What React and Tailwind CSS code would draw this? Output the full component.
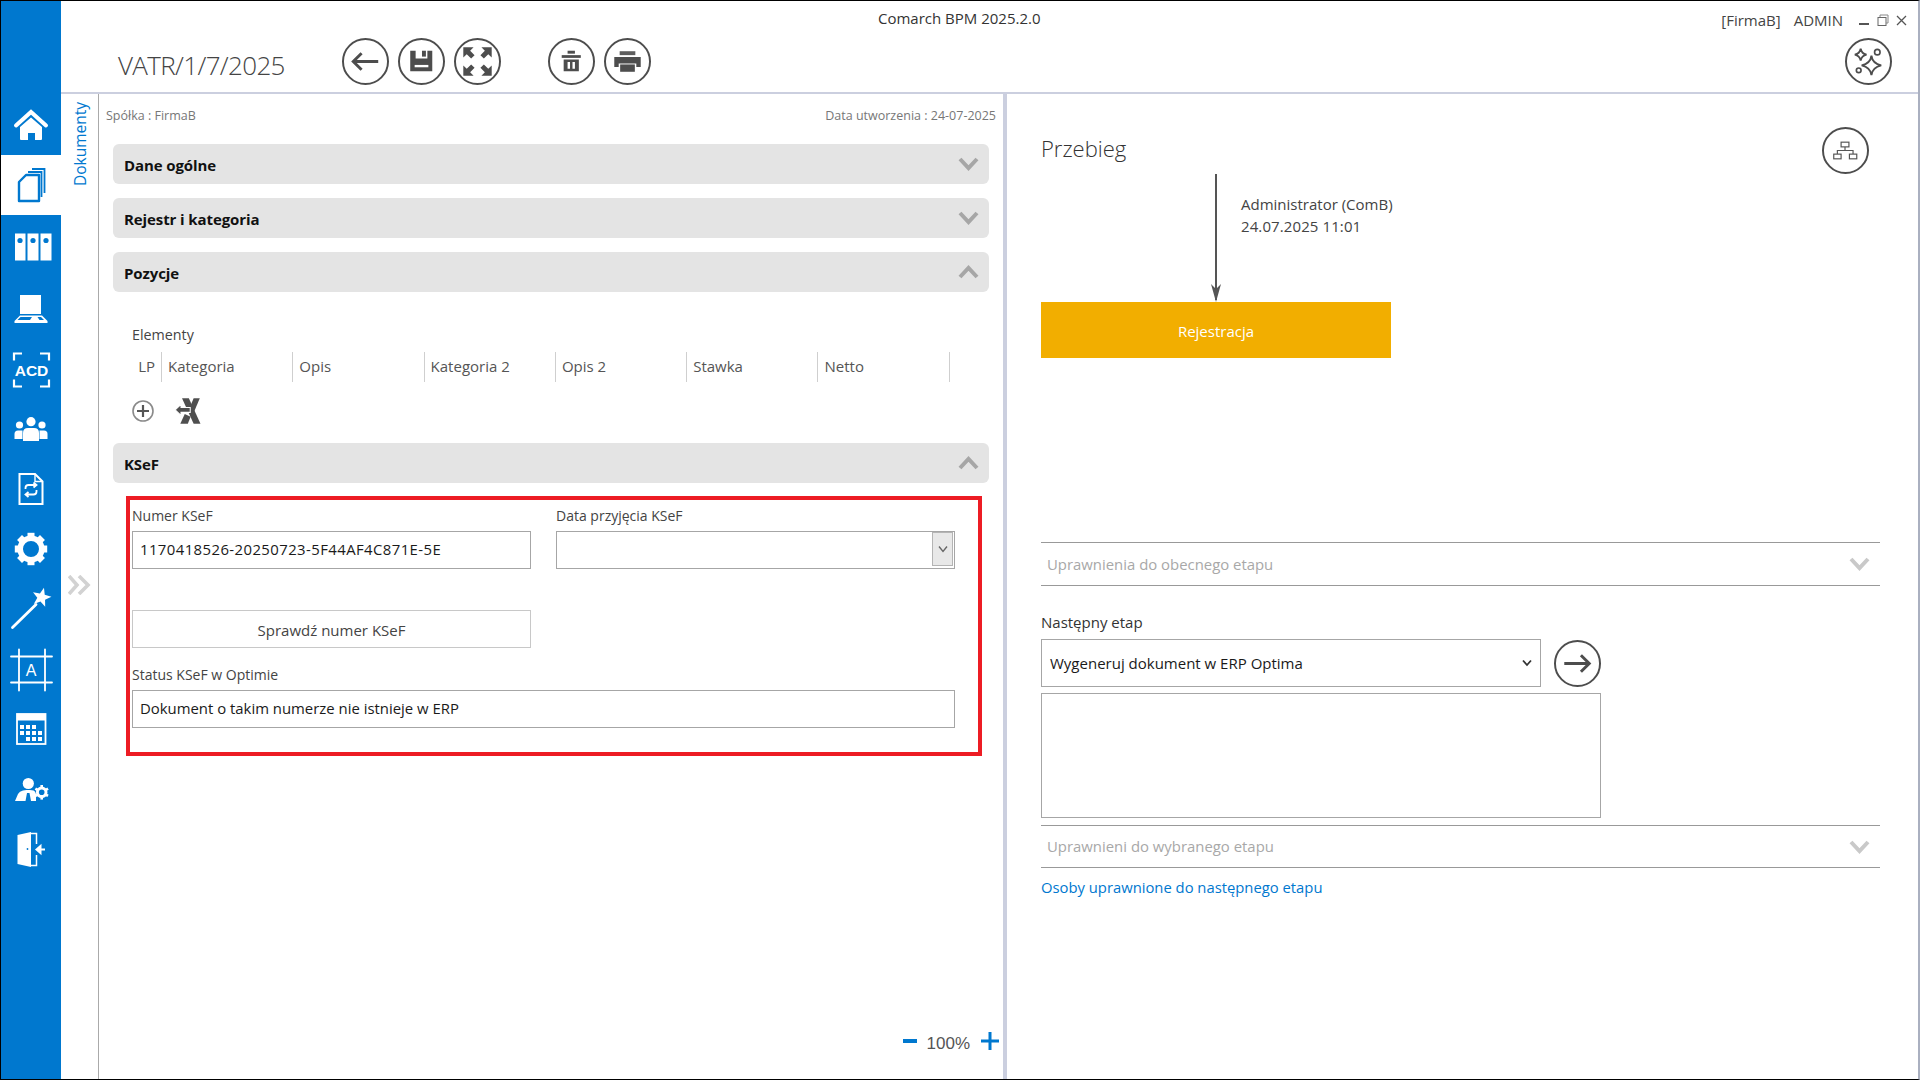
import React from "react";

const Btn = ({ children, vb = "0 0 48 48", cls = "" }) => (
  <svg width="47" height="47" viewBox={vb} className={"shrink-0 " + cls}>
    <circle cx="24" cy="24" r="23" fill="none" stroke="#4d4d4d" strokeWidth="2" />
    {children}
  </svg>
);

const Chev = ({ up, color = "#a6a6a6" }) => (
  <svg width="21" height="14" viewBox="0 0 21 14" className="shrink-0">
    <polyline points={up ? "2,12 10.5,3 19,12" : "2,2 10.5,11 19,2"} fill="none" stroke={color} strokeWidth="4" />
  </svg>
);

const star = (cx, cy, R, r) => {
  const p = [];
  for (let i = 0; i < 10; i++) {
    const a = -Math.PI / 2 + (i * Math.PI) / 5 + 0.25;
    const d = i % 2 ? r : R;
    p.push(`${cx + d * Math.cos(a)},${cy + d * Math.sin(a)}`);
  }
  return p.join(" ");
};

const W = "#ffffff";
const B = "#0078cf";

const Ic = ({ vb, children }) => (
  <svg width="44" height="44" viewBox={vb} className="shrink-0">{children}</svg>
);

const side = [
  { h: "h-[60px]", active: false, el: (
    <Ic vb="9 103 44 44">
      <polyline points="16,125.5 31,112 46,125.5" fill="none" stroke={W} strokeWidth="4" strokeLinecap="round" />
      <path d="M20 127 L31 117.5 L42 127 V139 Q42 140 41 140 H35 V133 H28 V140 H21 Q20 140 20 139 Z" fill={W} />
    </Ic>) },
  { h: "h-[60px]", active: true, el: (
    <Ic vb="9 163 44 44">
      <path d="M26 175 H39 V201 H19 V182 Z" fill="none" stroke={B} strokeWidth="2.4" strokeLinejoin="round" />
      <path d="M28 172 H41.5 V197" fill="none" stroke={B} strokeWidth="1.8" />
      <path d="M32 169 H44.5 V193" fill="none" stroke={B} strokeWidth="1.8" />
    </Ic>) },
  { h: "h-[63px]", active: false, el: (
    <Ic vb="9 224.5 44 44">
      <rect x="15" y="233" width="10.5" height="27" fill={W} />
      <rect x="27.5" y="233" width="11" height="27" fill={W} />
      <rect x="40.5" y="233" width="11" height="27" fill={W} />
      <circle cx="20" cy="240" r="2.6" fill={B} />
      <circle cx="33" cy="240" r="2.6" fill={B} />
      <circle cx="46" cy="240" r="2.6" fill={B} />
    </Ic>) },
  { h: "h-[62px]", active: false, el: (
    <Ic vb="9 287 44 44">
      <rect x="20" y="295" width="21" height="19" fill={W} />
      <path d="M20 315.5 H42 L47.5 321 V323 H14.5 V321 Z" fill={W} />
      <path d="M20.5 317 H32 L30 320 H17.5 Z" fill={B} />
      <path d="M37.5 317 H41 L44 320 H39.5 Z" fill={B} />
    </Ic>) },
  { h: "h-[59px]", active: false, el: (
    <Ic vb="9 347.5 44 44">
      <path d="M14 360 V353 H22 M40 353 H49 V360 M49 379 V386 H40 M22 386 H14 V379" fill="none" stroke={W} strokeWidth="2.2" />
      <text x="31.5" y="375.3" textAnchor="middle" fill={W} fontFamily="'Liberation Sans',sans-serif" fontWeight="700" fontSize="15.5">ACD</text>
    </Ic>) },
  { h: "h-[60px]", active: false, el: (
    <Ic vb="9 407 44 44">
      <circle cx="31" cy="421.7" r="4.6" fill={W} />
      <path d="M23 441 V433 Q23 428 28 428 H34 Q39 428 39 433 V441 Z" fill={W} />
      <circle cx="19.5" cy="425" r="3.6" fill={W} />
      <path d="M14.5 439 V434 Q14.5 430.5 18 430.5 H22.5 V439 Z" fill={W} />
      <circle cx="42" cy="425" r="3.6" fill={W} />
      <path d="M47.5 439 V434 Q47.5 430.5 44 430.5 H39.5 V439 Z" fill={W} />
    </Ic>) },
  { h: "h-[60px]", active: false, el: (
    <Ic vb="9 467 44 44">
      <path d="M19.5 474 H35 L42.5 481.5 V504 H19.5 Z" fill="none" stroke={W} strokeWidth="2" />
      <path d="M35 474 V481.5 H42.5" fill="none" stroke={W} strokeWidth="1.4" />
      <path d="M25.5 489 V488 Q25.5 485 28.5 485 H36 M33.5 482.5 L36.5 485 L33.5 487.5" fill="none" stroke={W} strokeWidth="1.8" />
      <path d="M36.5 490 V491.5 Q36.5 494.5 33.5 494.5 H26 M28.5 492 L25.5 494.5 L28.5 497" fill="none" stroke={W} strokeWidth="1.8" />
    </Ic>) },
  { h: "h-[60px]", active: false, el: (
    <Ic vb="9 527 44 44">
      <circle cx="31" cy="549" r="10.8" fill="none" stroke={W} strokeWidth="5.6" />
      {[0, 45, 90, 135, 180, 225, 270, 315].map((a) => (
        <rect key={a} x="27.5" y="532.8" width="7" height="6" fill={W} transform={`rotate(${a} 31 549)`} />
      ))}
    </Ic>) },
  { h: "h-[60px]", active: false, el: (
    <Ic vb="9 586.5 44 44">
      <line x1="12.5" y1="627" x2="36" y2="604" stroke={W} strokeWidth="2.8" strokeLinecap="round" />
      <polygon points={star(41.5, 597, 10, 4.2)} fill={W} />
    </Ic>) },
  { h: "h-[61px]", active: false, el: (
    <Ic vb="9 647.5 44 44">
      <path d="M19 649 V690 M45 649 V690 M11 656 H52 M11 682 H52" fill="none" stroke={W} strokeWidth="1.8" strokeLinecap="round" />
      <text x="31" y="675" textAnchor="middle" fill={W} fontFamily="'Liberation Sans',sans-serif" fontSize="16">A</text>
    </Ic>) },
  { h: "h-[58px]", active: false, el: (
    <Ic vb="9 707 44 44">
      <rect x="17" y="714" width="28.5" height="30" fill="none" stroke={W} strokeWidth="1.8" />
      <rect x="17" y="714" width="28.5" height="6.5" fill={W} />
      {[[20, 725], [26, 725], [32, 725], [20, 731], [26, 731], [32, 731], [38, 731], [26, 737], [32, 737], [38, 737]].map(([x, y]) => (
        <rect key={x + "-" + y} x={x} y={y} width="4" height="4" fill={W} />
      ))}
    </Ic>) },
  { h: "h-[62px]", active: false, el: (
    <Ic vb="9 767 44 44">
      <circle cx="28.3" cy="783.5" r="5.6" fill={W} />
      <path d="M15 801 L18 794 Q19.5 791 23 790.5 L26.5 790 H30 L33.5 790.5 Q35.5 791 36 794 V801 H31 L29.5 793 H27 L25.5 801 Z" fill={W} />
      <circle cx="41.7" cy="792.3" r="4.3" fill="none" stroke={W} strokeWidth="3" />
      {[0, 60, 120, 180, 240, 300].map((a) => (
        <rect key={a} x="40.4" y="785" width="2.6" height="2.4" fill={W} transform={`rotate(${a} 41.7 792.3)`} />
      ))}
    </Ic>) },
  { h: "h-[59px]", active: false, el: (
    <Ic vb="9 828 44 44">
      <path d="M17.5 835 L31 832 V867 L17.5 864 Z" fill={W} />
      <circle cx="27.5" cy="849" r="0.9" fill={B} />
      <path d="M31 833.5 H36.5 V844 M36.5 855 V865.5 H31" fill="none" stroke={W} strokeWidth="1.5" />
      <path d="M45 849.5 H40 M40.5 846 L36.5 849.5 L40.5 853 Z" fill={W} stroke={W} strokeWidth="2" />
    </Ic>) },
];

const Bar = ({ title, up }) => (
  <div className="h-10 rounded-[6px] bg-[#e4e4e4] flex items-center justify-between pl-[11px] pr-[10px]">
    <span className="pt-[2px] text-[15px] font-bold tracking-[-0.1px] text-[#111]">{title}</span>
    <Chev up={up} />
  </div>
);

const Acc = ({ title, h }) => (
  <div className={h + " border-y border-[#999999] flex items-center justify-between pl-[6px] pr-[10px]"}>
    <span className="text-[14.9px] text-[#a8a8a8]">{title}</span>
    <Chev color="#c9c9c9" />
  </div>
);

const Field = ({ children, cls = "" }) => (
  <div className={"h-[38px] border border-[#a6a6a6] bg-white flex items-center pl-[7px] pb-[2px] text-[14.9px] text-[#1a1a1a] " + cls}>{children}</div>
);

const cols = ["Kategoria", "Opis", "Kategoria 2", "Opis 2", "Stawka", "Netto"];

export default function App() {
  return (
    <div className="w-[1920px] h-[1080px] flex border-t border-l border-b border-black border-r-2 border-r-[#aab0c0] bg-white overflow-hidden font-['Open_Sans',sans-serif] text-[#444]">
      <nav className="w-[60px] shrink-0 bg-[#0078cf] pt-[94px] flex flex-col">
        {side.map((s, i) => (
          <div key={i} className={s.h + " flex items-center justify-center " + (s.active ? "bg-white" : "")}>{s.el}</div>
        ))}
      </nav>

      <div className="flex-1 flex flex-col min-w-0">
        <header className="h-[93px] shrink-0 border-b-2 border-[#cbcfdf] flex flex-col">
          <div className="h-[37px] flex items-start">
            <span className="ml-[817px] mt-[8px] text-[15px] leading-[18px] text-[#333]">Comarch BPM 2025.2.0</span>
            <div className="ml-auto mt-[10px] flex items-center text-[15px] leading-[18px] text-[#444]">
              <span>[FirmaB]</span>
              <span className="ml-[13px]">ADMIN</span>
              <svg width="52" height="14" viewBox="0 0 52 14" className="ml-[15px] mr-[8px] mt-[2px]">
                <rect x="1" y="9" width="10" height="2" fill="#555" />
                <rect x="20" y="3.5" width="8" height="8" fill="none" stroke="#666" strokeWidth="1" />
                <path d="M22 3 V1 H30 V9 H28" fill="none" stroke="#888" strokeWidth="1" />
                <path d="M39 2 L48 11 M48 2 L39 11" stroke="#555" strokeWidth="1.3" />
              </svg>
            </div>
          </div>
          <div className="flex items-start pr-[26px]">
            <span className="ml-[57px] w-[224px] mt-[9px] text-[26px] leading-[36px] font-light tracking-[-0.66px] text-[#444]">VATR/1/7/2025</span>
            <div className="flex gap-[9px]">
              <Btn><path d="M11.5 24 H37 M20 15.5 L11.5 24 L20 32.5" fill="none" stroke="#4d4d4d" strokeWidth="3" /></Btn>
              <Btn>
                <path d="M12.5 13 H18 V21 H30 V13 H35 V34 H12.5 Z" fill="#4d4d4d" />
                <rect x="24.5" y="13" width="4" height="6" fill="#4d4d4d" />
                <rect x="17" y="27.5" width="14" height="2.4" fill="#fff" />
              </Btn>
              <Btn>
                <path d="M9.5 9.5 H20 L16.5 13 L21 17.5 L17.5 21 L13 16.5 L9.5 20 Z" fill="#4d4d4d" />
                <path d="M38.5 9.5 H28 L31.5 13 L27 17.5 L30.5 21 L35 16.5 L38.5 20 Z" fill="#4d4d4d" />
                <path d="M9.5 38.5 H20 L16.5 35 L21 30.5 L17.5 27 L13 31.5 L9.5 28 Z" fill="#4d4d4d" />
                <path d="M38.5 38.5 H28 L31.5 35 L27 30.5 L30.5 27 L35 31.5 L38.5 28 Z" fill="#4d4d4d" />
              </Btn>
              <div className="w-[29px] shrink-0" />
              <Btn>
                <rect x="14" y="17.5" width="19.5" height="2.8" fill="#4d4d4d" />
                <rect x="20" y="13" width="7.5" height="3" fill="#4d4d4d" />
                <path d="M16 22 H31.5 V34 H16 Z M20 24.5 V31.5 H22.5 V24.5 Z M25 24.5 V31.5 H27.5 V24.5 Z" fill="#4d4d4d" fillRule="evenodd" />
              </Btn>
              <Btn>
                <rect x="16" y="13.5" width="16" height="4" fill="#5d5d5d" />
                <path d="M10.5 19.5 H37.5 V29.5 H33 V26 H15 V29.5 H10.5 Z" fill="#4d4d4d" />
                <rect x="16.5" y="27" width="15" height="7.5" fill="#4d4d4d" />
              </Btn>
            </div>
            <Btn cls="ml-auto">
              <path d="M27 18 Q28 26 37 28 Q28 30 27 38 Q26 30 17 28 Q26 26 27 18 Z" fill="none" stroke="#4d4d4d" strokeWidth="1.9" />
              <path d="M16 11 Q17 16 22 17 Q17 18 16 23 Q15 18 10 17 Q15 16 16 11 Z" fill="none" stroke="#4d4d4d" strokeWidth="1.9" />
              <circle cx="33" cy="14.5" r="2.8" fill="none" stroke="#4d4d4d" strokeWidth="1.7" />
              <circle cx="14" cy="33" r="2.4" fill="none" stroke="#4d4d4d" strokeWidth="1.7" />
            </Btn>
          </div>
        </header>

        <div className="flex-1 flex min-h-0">
          <aside className="w-[38px] shrink-0 border-r border-[#aaaaaa] flex flex-col">
            <span className="ml-[11px] mt-[8px] text-[15.5px] leading-[16px] text-[#0078cf] [writing-mode:vertical-rl] rotate-180 self-start">Dokumenty</span>
            <svg width="24" height="20" viewBox="0 0 24 20" className="ml-[7px] mt-[389px]">
              <path d="M1 1 L9 10 L1 19 M11 1 L20 10 L11 19" fill="none" stroke="#d2d2d2" strokeWidth="3.6" />
            </svg>
          </aside>

          <main className="w-[904px] shrink-0 border-r-4 border-[#cbcfdf] box-content flex flex-col">
            <div className="mx-[7px] mt-[14px] h-4 flex items-center justify-between text-[12.5px] text-[#777]">
              <span>Spółka : FirmaB</span>
              <span>Data utworzenia : 24-07-2025</span>
            </div>
            <div className="mx-[14px] mt-5 flex flex-col">
              <Bar title="Dane ogólne" />
              <div className="mt-[14px]"><Bar title="Rejestr i kategoria" /></div>
              <div className="mt-[14px]"><Bar title="Pozycje" up /></div>

              <div className="ml-[19px] mt-[33px] h-5 flex items-center text-[14.3px] text-[#444]">Elementy</div>
              <div className="ml-[19px] mt-[7px] h-[30px] flex text-[15px] text-[#555]">
                <div className="w-[30px] border-r border-[#cfcfcf] flex items-center justify-end pr-[6px] pb-[2px]">LP</div>
                {cols.map((c) => (
                  <div key={c} className="w-[131.3px] border-r border-[#cfcfcf] flex items-center pl-[6px] pb-[2px]">{c}</div>
                ))}
              </div>
              <div className="ml-[19px] mt-[18px] h-[22px] flex items-center">
                <svg width="22" height="22" viewBox="0 0 22 22">
                  <circle cx="11" cy="11" r="10" fill="none" stroke="#8a8a8a" strokeWidth="1.6" />
                  <path d="M11 5 V17 M5 11 H17" stroke="#555" strokeWidth="2.2" />
                </svg>
                <svg width="26" height="26" viewBox="168 57 75 76" className="ml-[21px] shrink-0">
                  <polygon points="188,58 208,58 242,132 222,132" fill="#4f4f4f" />
                  <polygon points="240,58 222,58 210,86 222,100" fill="#4f4f4f" />
                  <polygon points="183,132 205,132 213,112 196,104" fill="#4f4f4f" />
                  <polygon points="168,92 185,76 185,85 212,85 212,99 185,99 185,108" fill="#4f4f4f" stroke="#fff" strokeWidth="3" />
                </svg>
              </div>

              <div className="mt-[21px]"><Bar title="KSeF" up /></div>

              <div className="ml-[13px] mt-[13px] w-[856px] h-[260px] border-4 border-[#ed1c24] pl-[2px]">
                <div className="flex gap-[25px] w-[823px]">
                  <div className="w-[399px] pt-[5px]">
                    <div className="h-5 flex items-center text-[14px] text-[#444]">Numer KSeF</div>
                    <Field cls="mt-[6px] tracking-[0.42px] pl-[6px]">1170418526-20250723-5F44AF4C871E-5E</Field>
                  </div>
                  <div className="w-[399px] pt-[5px]">
                    <div className="h-5 flex items-center text-[14px] text-[#444]">Data przyjęcia KSeF</div>
                    <Field cls="mt-[6px] justify-end pr-px pb-0">
                      <div className="w-[21px] h-[34px] bg-[#e8e8e8] border border-[#b4b4b4] flex items-center justify-center">
                        <svg width="10" height="8" viewBox="0 0 10 8"><path d="M1 1.5 L5 6.5 L9 1.5" fill="none" stroke="#666" strokeWidth="1.4" /></svg>
                      </div>
                    </Field>
                  </div>
                </div>
                <div className="mt-[41px] w-[399px] h-[38px] border border-[#c8c8c8] flex items-center justify-center pt-[2px] text-[15px] text-[#444]">Sprawdź numer KSeF</div>
                <div className="mt-[16px] h-5 flex items-center text-[14px] text-[#444]">Status KSeF w Optimie</div>
                <Field cls="mt-[6px] w-[823px] pl-[6px]">Dokument o takim numerze nie istnieje w ERP</Field>
              </div>
            </div>
            <div className="mt-auto mb-[26px] h-6 flex items-center justify-end pr-[4px] text-[#0078cf]">
              <svg width="14" height="4" viewBox="0 0 14 4"><rect width="14" height="4" fill="#0078cf" /></svg>
              <span className="ml-[10px] mr-[11px] mt-[5px] text-[17px] font-['Liberation_Sans',sans-serif] text-[#555]">100%</span>
              <svg width="18" height="18" viewBox="0 0 18 18"><path d="M9 0 V18 M0 9 H18" stroke="#0078cf" strokeWidth="3" /></svg>
            </div>
          </main>

          <section className="flex-1 pl-[34px] min-w-0">
            <div className="w-[839px]">
              <div className="mt-[32px] h-12 flex items-center justify-between pr-[11px]">
                <span className="mb-[4px] text-[22px] font-light text-[#333]">Przebieg</span>
                <Btn>
                  <g fill="none" stroke="#555" strokeWidth="1.2">
                    <rect x="19.5" y="15.5" width="8" height="4.8" />
                    <rect x="12" y="27.7" width="7.5" height="4.8" />
                    <rect x="28" y="27.7" width="7.5" height="4.8" />
                    <path d="M23.5 20.3 V24 M15.7 27.7 V24 H31.7 V27.7" />
                  </g>
                </Btn>
              </div>
              <div className="h-[128px] flex">
                <svg width="14" height="128" viewBox="0 0 14 128" className="ml-[168px]">
                  <path d="M7 0 V126" stroke="#555" strokeWidth="2" />
                  <path d="M2 110 L7 128 L12 110 L7 115 Z" fill="#555" />
                </svg>
                <div className="ml-[18px] pt-[19px] text-[15px] leading-[22px] text-[#444]">
                  <div>Administrator (ComB)</div>
                  <div className="tracking-[0.1px]">24.07.2025 11:01</div>
                </div>
              </div>
              <div className="w-[350px] h-14 bg-[#f2ae00] flex items-center justify-center pt-[2px] text-[15px] text-white">Rejestracja</div>

              <div className="mt-[184px]"><Acc h="h-[44px]" title="Uprawnienia do obecnego etapu" /></div>

              <div className="mt-[26px] h-5 flex items-center text-[15px] text-[#333]">Następny etap</div>
              <div className="mt-[7px] flex items-center w-[560px] justify-between">
                <div className="w-[500px] h-12 border border-[#a6a6a6] flex items-center justify-between pl-[8px] pr-2 text-[15px] text-[#1a1a1a]">
                  <span>Wygeneruj dokument w ERP Optima</span>
                  <svg width="10" height="8" viewBox="0 0 10 8"><path d="M1 1.5 L5 6 L9 1.5" fill="none" stroke="#333" strokeWidth="1.8" /></svg>
                </div>
                <Btn><path d="M10.5 24 H36 M27.5 15.5 L36 24 L27.5 32.5" fill="none" stroke="#4d4d4d" strokeWidth="3" /></Btn>
              </div>
              <div className="mt-[6px] w-[560px] h-[125px] border border-[#a6a6a6]" />
              <div className="mt-[7px]"><Acc h="h-[43px]" title="Uprawnieni do wybranego etapu" /></div>
              <div className="mt-[9px] h-5 flex items-center text-[14.8px] text-[#0078cf]">Osoby uprawnione do następnego etapu</div>
            </div>
          </section>
        </div>
      </div>
    </div>
  );
}
